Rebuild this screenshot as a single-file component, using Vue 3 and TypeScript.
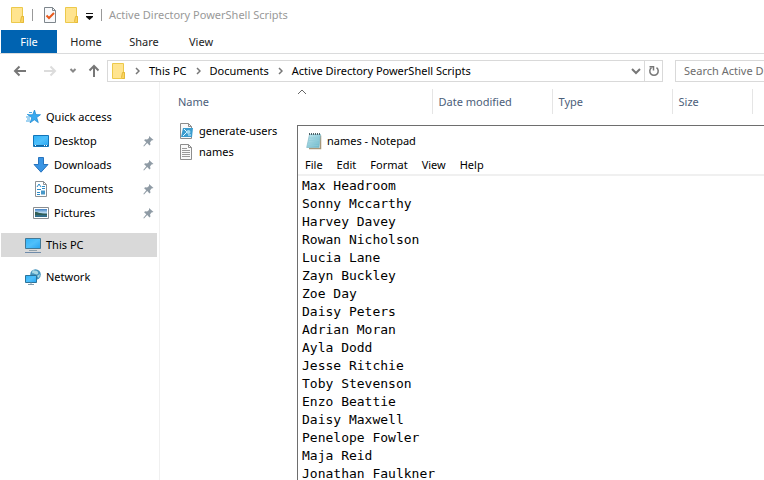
<script setup lang="ts">
import { ref } from 'vue'

interface Place {
  label: string
  icon: string
  level: 'root' | 'child'
  pinned?: boolean
  selected?: boolean
}

const tabs: string[] = ['Home', 'Share', 'View']
const crumbs: string[] = ['This PC', 'Documents', 'Active Directory PowerShell Scripts']
const places: Place[] = [
  { label: 'Quick access', icon: 'star', level: 'root' },
  { label: 'Desktop', icon: 'desktop', level: 'child', pinned: true },
  { label: 'Downloads', icon: 'download', level: 'child', pinned: true },
  { label: 'Documents', icon: 'document', level: 'child', pinned: true },
  { label: 'Pictures', icon: 'picture', level: 'child', pinned: true },
  { label: 'This PC', icon: 'pc', level: 'root', selected: true },
  { label: 'Network', icon: 'network', level: 'root' },
]
const files = [
  { name: 'generate-users', icon: 'script' },
  { name: 'names', icon: 'text' },
]
const menus: string[] = ['File', 'Edit', 'Format', 'View', 'Help']
const search = ref('')
const text = ref(
  [
    'Max Headroom',
    'Sonny Mccarthy',
    'Harvey Davey',
    'Rowan Nicholson',
    'Lucia Lane',
    'Zayn Buckley',
    'Zoe Day',
    'Daisy Peters',
    'Adrian Moran',
    'Ayla Dodd',
    'Jesse Ritchie',
    'Toby Stevenson',
    'Enzo Beattie',
    'Daisy Maxwell',
    'Penelope Fowler',
    'Maja Reid',
    'Jonathan Faulkner',
  ].join('\n'),
)
</script>

<template>
  <div class="explorer">
    <svg class="defs" aria-hidden="true">
      <defs>
        <linearGradient id="screen" x1="0" y1="0" x2="1" y2="1">
          <stop offset="0" stop-color="#2fb2f8" />
          <stop offset="0.5" stop-color="#4fc0fb" />
          <stop offset="1" stop-color="#27a3f0" />
        </linearGradient>
        <linearGradient id="pad" x1="0" y1="0" x2="1" y2="1">
          <stop offset="0" stop-color="#c4e9f1" />
          <stop offset="1" stop-color="#67b5c8" />
        </linearGradient>
        <linearGradient id="sky" x1="0" y1="0" x2="0" y2="1">
          <stop offset="0" stop-color="#3f7fc4" />
          <stop offset="0.5" stop-color="#c5e2f2" />
          <stop offset="0.6" stop-color="#3d7286" />
          <stop offset="1" stop-color="#2c6b8a" />
        </linearGradient>
      </defs>
      <symbol id="folder" viewBox="0 0 14 16">
        <path d="M.5.5h11v9h1v6H.5z" fill="#ffe48f" stroke="#ecc94b" />
        <path d="M10.500 9.500h2v6h-2l-1-1z" fill="#fbd55f" stroke="#e5b93a" />
      </symbol>
    </svg>

    <header class="titlebar">
      <svg class="folder"><use href="#folder" /></svg>
      <span class="bar"></span>
      <button class="tool" type="button" aria-label="Properties">
        <svg width="12" height="16" viewBox="0 0 12 16">
          <path d="M.5.5h8l3 3v12H.5z" fill="#f8f9fb" stroke="#7e868c" />
          <path d="M8.500.5v3h3" fill="none" stroke="#7e868c" />
          <path d="m2.500 8.500 2.500 2.500 5-5" fill="none" stroke="#e8591c" stroke-width="2" />
        </svg>
      </button>
      <button class="tool" type="button" aria-label="New folder">
        <svg class="folder"><use href="#folder" /></svg>
      </button>
      <button class="tool" type="button" aria-label="Customize toolbar">
        <svg width="8" height="16" viewBox="0 0 8 16">
          <path d="M0 6h7v1H0zM0 9h7v1L3.500 13 0 10z" fill="#111" />
        </svg>
      </button>
      <span class="bar"></span>
      <span class="title">Active Directory PowerShell Scripts</span>
    </header>

    <nav class="tabs" aria-label="Ribbon">
      <button class="file" type="button">File</button>
      <button v-for="tab in tabs" :key="tab" type="button">{{ tab }}</button>
    </nav>

    <div class="navigation">
      <div class="arrows">
        <button type="button" aria-label="Back">
          <svg width="14" height="12" viewBox="0 0 14 12"><path d="M13 6H2M6.500 1.500 2 6l4.500 4.500" fill="none" stroke="#777" stroke-width="2" /></svg>
        </button>
        <button type="button" aria-label="Forward">
          <svg width="14" height="12" viewBox="0 0 14 12"><path d="M1 6h11M7.500 1.500 12 6l-4.500 4.500" fill="none" stroke="#dcdcdc" stroke-width="2" /></svg>
        </button>
        <button class="narrow" type="button" aria-label="Recent locations">
          <svg width="8" height="12" viewBox="0 0 8 12"><path d="m1.500 4 2.500 2.500L6.500 4" fill="none" stroke="#888" stroke-width="2" /></svg>
        </button>
        <button class="up" type="button" aria-label="Up">
          <svg width="12" height="14" viewBox="0 0 12 14"><path d="M6 13V2M1.500 6.500 6 2l4.500 4.500" fill="none" stroke="#777" stroke-width="2" /></svg>
        </button>
      </div>
      <div class="address">
        <svg class="folder"><use href="#folder" /></svg>
        <template v-for="crumb in crumbs" :key="crumb">
          <svg class="chevron" viewBox="0 0 5 8"><path d="m1 1 3 3-3 3" fill="none" stroke="#777" stroke-width="1.500" /></svg>
          <button class="crumb" type="button">{{ crumb }}</button>
        </template>
        <button class="history" type="button" aria-label="Previous locations">
          <svg width="10" height="8" viewBox="0 0 10 8"><path d="m1 2 4 4 4-4" fill="none" stroke="#777" stroke-width="2" /></svg>
        </button>
        <button class="refresh" type="button" aria-label="Refresh">
          <svg width="12" height="14" viewBox="0 0 12 14">
            <path d="M8.500 3.700A4.200 4.200 0 1 1 3.500 3.700" fill="none" stroke="#777" stroke-width="1.500" />
            <path d="M1.500 2.700h4V6.500" fill="none" stroke="#777" stroke-width="1.500" />
          </svg>
        </button>
      </div>
      <input v-model="search" class="search" type="text" aria-label="Search" placeholder="Search Active Directory PowerShell Scripts" />
    </div>

    <div class="content">
      <nav class="places" aria-label="Folders">
        <a v-for="place in places" :key="place.label + place.level" href="#" :class="[place.level, { selected: place.selected }]">
          <svg class="place-icon" viewBox="0 0 16 16">
            <template v-if="place.icon === 'star'">
              <path d="m9.500 1 1.400 4.600 4.600.1-3.800 2.900 1.600 5-4-2.800-4.200 3 1.700-5L3 5.800l4.700-.1z" fill="#38aaf0" stroke="#1584cf" stroke-width=".7" />
              <path d="M4 3.500h3M2 5.500h2M1 8h4M2 10h3M1 12h4" stroke="#45a8e5" />
            </template>
            <template v-else-if="place.icon === 'desktop'">
              <path d="M.5 2.500h15v11H.5z" fill="url(#screen)" stroke="#1275b9" />
              <path d="M1 12.500h14" stroke="#1265a0" />
              <path d="M2 12.500h1M11 12.500h1M13 12.500h1" stroke="#fff" />
            </template>
            <path v-else-if="place.icon === 'download'" d="M5.500.5h5v7h4.500l-7 7.700-7-7.700h4.500z" fill="#3a95e4" stroke="#2874be" />
            <template v-else-if="place.icon === 'document'">
              <path d="M2.500.5h8l3 3v12h-11z" fill="#fff" stroke="#8b9094" />
              <path d="M10.500.5v3h3" fill="none" stroke="#8b9094" />
              <path d="m4 6 2-3 2 3M4 8.500h4M9 5.500h3M9 7.500h3M4 11.500h3M4 13.500h3" fill="none" stroke="#2c8bc8" />
              <path d="M8 9.500h4v4H8z" fill="#4798c9" />
            </template>
            <template v-else-if="place.icon === 'picture'">
              <path d="M.5 2.500h15v11H.5z" fill="#fff" stroke="#898d90" />
              <path d="M2 4h12v8H2z" fill="url(#sky)" />
              <path d="M2 7c4 0 5 2 12 2v1H2z" fill="#315e55" />
            </template>
            <template v-else-if="place.icon === 'pc'">
              <path d="M.5 1.500h15v10H.5z" fill="url(#screen)" stroke="#427895" />
              <path d="M4 13.500h8" stroke="#93a3ad" />
              <path d="M0 15.500h16" stroke="#708caa" />
            </template>
            <template v-else>
              <circle cx="10.500" cy="5.500" r="5.300" fill="#4594bd" />
              <path d="M8 1c2 1 4 0 5 2s-1 3-3 2-3 0-3-2zM12 7l3-2-1 4z" fill="#a8d8e4" />
              <path d="M.5 6.500h11v7H.5z" fill="url(#screen)" stroke="#2d7399" />
              <path d="M6 13.500V15M3 15.500h6" stroke="#7f9cae" />
            </template>
          </svg>
          <span>{{ place.label }}</span>
          <svg v-if="place.pinned" class="pin" viewBox="0 0 11 12">
            <path d="m6 1 4.500 4-2 .5-1.500 2 .5 2-1 1L4.200 8 1 11.500.3 11l3-3.700-2.200-2 1-1 2 .3L6 3z" fill="#8f9ba5" />
          </svg>
        </a>
      </nav>

      <main class="listing">
        <svg class="sort" viewBox="0 0 10 6"><path d="m1 5 4-4 4 4" fill="none" stroke="#666" /></svg>
        <table>
          <colgroup>
            <col class="c-name" />
            <col class="c-wide" />
            <col class="c-wide" />
            <col class="c-size" />
          </colgroup>
          <thead>
            <tr><th scope="col">Name</th><th scope="col">Date modified</th><th scope="col">Type</th><th scope="col">Size</th></tr>
          </thead>
          <tbody>
            <tr v-for="file in files" :key="file.name">
              <td>
                <div class="entry">
                  <svg width="14" height="16" viewBox="0 0 14 16">
                    <path d="M1.500.5h8l3 3v12h-11z" fill="#fafafa" stroke="#8d8d8d" />
                    <path d="M9.500.5v3h3" fill="none" stroke="#8d8d8d" />
                    <template v-if="file.icon === 'script'">
                      <path d="M4 5h10l-1 9H2z" fill="#3b9cce" />
                      <path d="m5 6 3 3-4 4M9 12h3" fill="none" stroke="#e4f7ff" />
                      <circle cx="9.500" cy="9" r="2" fill="#a3dcf4" />
                    </template>
                    <path v-else d="M3 4.500h5M3 6.500h8M3 8.500h8M3 10.500h8M3 12.500h8" stroke="#9a9a9a" />
                  </svg>
                  {{ file.name }}
                </div>
              </td>
              <td></td><td></td><td></td>
            </tr>
          </tbody>
        </table>
      </main>
    </div>

    <section class="notepad" aria-label="names - Notepad">
      <div class="caption">
        <svg width="16" height="18" viewBox="0 0 16 18">
          <path d="M3 16.500h11.500v-13" fill="none" stroke="#a8977a" stroke-width="1.500" />
          <path d="M3.500 2.500h11L13 15.500H.7z" fill="url(#pad)" stroke="#7fb9c7" stroke-width=".7" />
          <path d="M3 6h10.500M2.700 8.500H13M2.300 11h10.500M2 13.500h10.500" stroke="#8fcbd8" stroke-width=".7" />
          <path d="M3 2h12" stroke="#4d6269" stroke-width="2" stroke-dasharray="1 1" />
        </svg>
        <span>names - Notepad</span>
      </div>
      <div class="menus">
        <button v-for="menu in menus" :key="menu" type="button">{{ menu }}</button>
      </div>
      <textarea v-model="text" aria-label="Text editor" spellcheck="false" wrap="off"></textarea>
    </section>
  </div>
</template>

<style>
body {
  margin: 0;
}
</style>

<style scoped>
.explorer {
  position: relative;
  display: flex;
  flex-direction: column;
  height: 100vh;
  overflow: hidden;
  background: #fff;
  color: #000;
  font-family: "Noto Sans", "Open Sans", sans-serif;
  font-size: 11px;
  line-height: 16px;
}
.explorer * {
  box-sizing: border-box;
}
.defs {
  position: absolute;
  width: 0;
  height: 0;
}
svg {
  display: block;
  flex: none;
}
button {
  display: flex;
  align-items: center;
  justify-content: center;
  padding: 0;
  border: 0;
  background: transparent;
  color: inherit;
  font: inherit;
  white-space: nowrap;
}
.folder {
  width: 14px;
  height: 16px;
}
.titlebar {
  display: flex;
  align-items: center;
  gap: 7px;
  height: 30px;
  padding-left: 11px;
}
.titlebar .bar {
  width: 1px;
  height: 12px;
  background: #999;
}
.titlebar .bar + .tool {
  margin: 0 2px 0 4px;
}
.title {
  color: #999;
}
.tabs {
  display: grid;
  grid-template-columns: 56px 58px 58px 56px;
  height: 24px;
  padding-left: 1px;
  border-bottom: 1px solid #dadbdc;
  color: #222;
}
.tabs .file {
  background: #0063b1;
  color: #fff;
}
.navigation {
  display: grid;
  grid-template-columns: 107px 1fr 89px;
  align-items: center;
  padding-top: 6px;
}
.arrows {
  display: flex;
  align-items: center;
  padding-left: 5px;
}
.arrows button {
  width: 30px;
}
.arrows .narrow {
  width: 16px;
}
.arrows .up {
  width: 26px;
}
.address {
  display: flex;
  align-items: center;
  height: 22px;
  margin-right: 12px;
  padding-left: 4px;
  border: 1px solid #d9d9d9;
}
.chevron {
  width: 5px;
  height: 8px;
  margin: 0 9px;
}
.history {
  width: 16px;
  margin-left: auto;
}
.refresh {
  align-self: stretch;
  width: 18px;
  border-left: 1px solid #d9d9d9;
}
.search {
  width: 260px;
  height: 22px;
  padding: 0 8px 2px;
  border: 1px solid #d9d9d9;
  font: inherit;
}
.search::placeholder {
  color: #6d6d6d;
}
.content {
  display: grid;
  grid-template-columns: 160px 1fr;
  flex: 1;
}
.places {
  padding: 23px 2px 0 1px;
  border-right: 1px solid #f0f0f0;
}
.places a {
  display: flex;
  align-items: center;
  gap: 5px;
  height: 24px;
  padding: 0 3px 0 24px;
  color: inherit;
  text-decoration: none;
}
.places .child {
  padding-left: 32px;
}
.places .child + .root,
.places .selected + .root {
  margin-top: 8px;
}
.place-icon {
  width: 16px;
  height: 16px;
}
.places .selected {
  background: #d9d9d9;
}
.pin {
  width: 11px;
  height: 12px;
  margin-left: auto;
}
.listing {
  position: relative;
  padding-top: 7px;
}
.sort {
  position: absolute;
  top: 7px;
  left: 137px;
  width: 10px;
  height: 6px;
}
table {
  width: 592px;
  border-collapse: collapse;
  table-layout: fixed;
}
.c-name {
  width: 272px;
}
.c-wide {
  width: 120px;
}
.c-size {
  width: 80px;
}
th {
  height: 25px;
  padding: 0 6px;
  border-right: 1px solid #e5e5e5;
  color: #4c607a;
  font-weight: 400;
  text-align: left;
}
th:first-child {
  padding-left: 18px;
}
td {
  height: 21px;
  padding: 0 0 0 19px;
}
tbody::before {
  content: "";
  display: block;
  height: 6px;
}
.entry {
  display: flex;
  align-items: center;
  gap: 6px;
}
.notepad {
  position: absolute;
  inset: 125px 0 0 297px;
  display: flex;
  flex-direction: column;
  border-top: 1px solid #6e6e6e;
  border-left: 1px solid #6e6e6e;
  background: #fff;
}
.caption {
  display: flex;
  align-items: center;
  gap: 5px;
  height: 30px;
  padding-left: 8px;
}
.menus {
  display: flex;
  gap: 14px;
  height: 20px;
  padding-left: 7px;
  border-bottom: 2px solid #f0f0f0;
}
textarea {
  flex: 1;
  padding: 1px 4px 0;
  border: 0;
  outline: 0;
  overflow: hidden;
  resize: none;
  background: #fff;
  color: #000;
  font-family: "DejaVu Sans Mono", "Liberation Mono", monospace;
  font-size: 13px;
  line-height: 18px;
}
</style>
